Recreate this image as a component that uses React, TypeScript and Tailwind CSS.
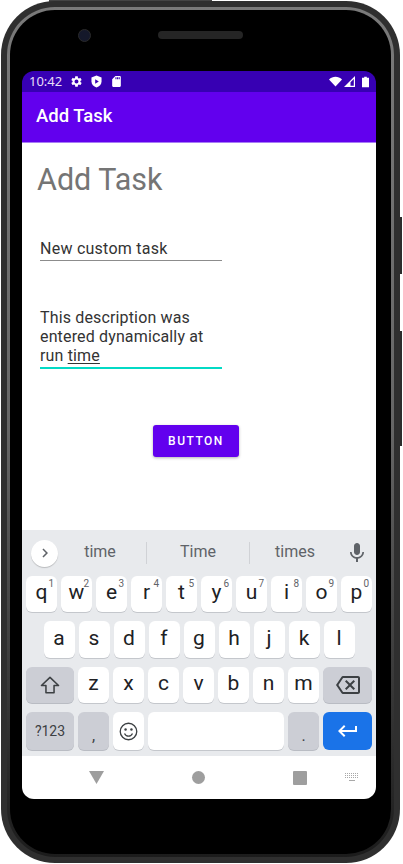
import { MdSettings, MdSdCard, MdMic, MdChevronRight, MdOutlineBackspace, MdKeyboardReturn } from "react-icons/md";

const row1 = [["q", "1"], ["w", "2"], ["e", "3"], ["r", "4"], ["t", "5"], ["y", "6"], ["u", "7"], ["i", "8"], ["o", "9"], ["p", "0"]];
const row2 = ["a", "s", "d", "f", "g", "h", "j", "k", "l"];
const row3 = ["z", "x", "c", "v", "b", "n", "m"];

const whiteKey = "bg-white rounded-[6px] shadow-[0_1px_0_#c4c7cc] flex items-center justify-center text-[#202124] text-[21px] leading-none";
const grayKey = "bg-[#ccced5] rounded-[6px] shadow-[0_1px_0_#b9bcc3] flex items-center justify-center text-[#3c4043]";

function Key({ label }: { label: string }) {
  return <div className={`${whiteKey} w-[31px] h-full pb-[3px]`}>{label}</div>;
}

function StatusBar() {
  return (
    <div className="h-[21px] bg-[#3700B3] flex items-center pl-[7px] pr-[7px] text-white">
      <span className="text-[13px] leading-none text-[#e6dff8] w-[31px]">10:42</span>
      <MdSettings className="ml-[10px] w-[13px] h-[13px]" />
      <svg viewBox="0 0 12 14" className="ml-[8px] w-[11px] h-[13px]">
        <path d="M6 0.5 11.5 2.5V7c0 3-2.3 5.500-5.500 6.500C2.800 12.500 0.500 10 0.500 7V2.500Z" fill="#fff" />
        <path d="M4.600 4.500 8.500 7 4.600 9.500Z" fill="#3700B3" />
      </svg>
      <MdSdCard className="ml-[8px] w-[13px] h-[13px]" />
      <svg viewBox="0 0 14 11" className="ml-auto w-[13px] h-[11px]">
        <path d="M0 3.300C2 1.300 4.400 0.300 7 0.300s5 1 7 3L7 11Z" fill="#fff" />
      </svg>
      <svg viewBox="0 0 11 11" className="ml-[2px] w-[11px] h-[11px]">
        <path d="M11 0V11H0Z" fill="#fff" />
        <path d="M9.800 3V9.800H6.500V6.300Z" fill="#3700B3" />
      </svg>
      <svg viewBox="0 0 8 12" className="ml-[7px] w-[7px] h-[12px]">
        <path d="M2.500 0H5.500V1H8V12H0V1H2.500Z" fill="#fff" />
      </svg>
    </div>
  );
}

function Form() {
  return (
    <div className="flex-1 bg-white font-['Roboto',sans-serif]">
      <h1 className="pl-[15px] pt-[17px] text-[30.500px] leading-[40px] text-[#757575] font-normal">Add Task</h1>
      <div className="ml-[18px] w-[182px] mt-[37px] border-b border-[#8c8c8c] pt-px pb-px h-[24px] text-[16px] leading-[21px] tracking-[0.25px] text-[#333]">
        New custom task
      </div>
      <div className="ml-[18px] w-[182px] mt-[47px] border-b-2 border-[#03DAC5] pb-[2px] text-[16px] leading-[19px] tracking-[0.15px] text-[#333]">
        <div>This description was</div>
        <div>entered dynamically at</div>
        <div>run <span className="underline underline-offset-2">time</span></div>
      </div>
      <div className="mt-[56px] ml-[131px] w-[86px] h-[32px] bg-[#6200EE] rounded-[3px] shadow-[0_1px_3px_rgba(0,0,0,0.3)] flex items-center justify-center text-white text-[12px] font-medium tracking-[1.500px]">
        BUTTON
      </div>
    </div>
  );
}

function Keyboard() {
  return (
    <div className="bg-[#e8eaed] h-[226px] font-['Roboto',sans-serif]">
      <div className="h-[46px] flex items-center">
        <div className="ml-[9px] w-[27px] h-[27px] rounded-full bg-white shadow-[0_1px_1px_rgba(0,0,0,0.2)] flex items-center justify-center">
          <MdChevronRight className="w-[18px] h-[18px] text-[#5f6368]" />
        </div>
        <div className="w-[88px] pr-[4px] pb-[2px] text-center text-[16px] text-[#5f6368]">time</div>
        <div className="w-px h-[22px] bg-[#d0d2d6]" />
        <div className="w-[102px] pb-[2px] text-center text-[16px] text-[#5f6368]">Time</div>
        <div className="w-px h-[22px] bg-[#d0d2d6]" />
        <div className="w-[90px] pb-[2px] text-center text-[16px] text-[#5f6368]">times</div>
        <MdMic className="ml-[5px] w-[24px] h-[24px] text-[#5f6368]" />
      </div>
      <div className="flex flex-col gap-[9px]">
        <div className="flex justify-center gap-[4px] h-[36px]">
          {row1.map(([k, n]) => (
            <div key={k} className={`${whiteKey} relative w-[31px] h-full pb-[3px]`}>
              {k}
              <span className="absolute top-[3px] right-[3px] text-[10px] leading-none text-[#5f6368]">{n}</span>
            </div>
          ))}
        </div>
        <div className="flex justify-center gap-[4px] h-[37px]">
          {row2.map((k) => <Key key={k} label={k} />)}
        </div>
        <div className="flex justify-center gap-[4px] h-[36px]">
          <div className={`${grayKey} w-[48px]`}>
            <svg viewBox="0 0 22 20" className="w-[20px] h-[18px]">
              <path d="M11 1.500 20.500 10.500H15.500V18.500H6.500V10.500H1.500Z" fill="none" stroke="#3c4043" strokeWidth="1.700" strokeLinejoin="round" />
            </svg>
          </div>
          {row3.map((k) => <Key key={k} label={k} />)}
          <div className={`${grayKey} w-[49px]`}>
            <MdOutlineBackspace className="w-[24px] h-[24px]" />
          </div>
        </div>
        <div className="flex justify-center gap-[4px] h-[38px]">
          <div className={`${grayKey} w-[48px] text-[14px]`}>?123</div>
          <div className={`${grayKey} w-[31px] text-[16px] pt-[10px]`}>,</div>
          <div className={`${whiteKey} w-[31px]`}>
            <svg viewBox="0 0 20 20" className="w-[19px] h-[19px]">
              <circle cx="10" cy="10" r="8.700" fill="none" stroke="#3c4043" strokeWidth="1.400" />
              <circle cx="6.900" cy="7.800" r="1.300" fill="#3c4043" />
              <circle cx="13.100" cy="7.800" r="1.300" fill="#3c4043" />
              <path d="M5.800 12c.8 1.800 2.400 2.900 4.200 2.900s3.400-1.100 4.200-2.900" fill="none" stroke="#3c4043" strokeWidth="1.300" />
            </svg>
          </div>
          <div className={`${whiteKey} w-[136px]`} />
          <div className={`${grayKey} w-[31px] text-[16px] pt-[10px]`}>.</div>
          <div className="bg-[#1a73e8] rounded-[6px] w-[49px] flex items-center justify-center text-white">
            <MdKeyboardReturn className="w-[24px] h-[24px]" />
          </div>
        </div>
      </div>
    </div>
  );
}

function NavBar() {
  return (
    <div className="h-[43px] bg-white flex items-center">
      <svg viewBox="0 0 15 13" className="ml-[67px] w-[15px] h-[13px]">
        <path d="M0 0H15L7.500 13Z" fill="#9e9e9e" />
      </svg>
      <div className="ml-[88px] w-[13px] h-[13px] rounded-full bg-[#9e9e9e]" />
      <div className="ml-[88px] w-[14px] h-[14px] rounded-[1px] bg-[#9e9e9e]" />
      <svg viewBox="0 0 14 9" className="ml-[38px] w-[14px] h-[9px]">
        <path d="M0 0.500H14M0 2.500H14M0 4.500H14" stroke="#a8a8a8" strokeWidth="1" strokeDasharray="1 1" />
        <path d="M4 7.500H10" stroke="#a8a8a8" strokeWidth="1" />
      </svg>
    </div>
  );
}

export default function App() {
  return (
    <div className="w-[403px] h-[864px] bg-white overflow-hidden pl-px pt-px">
      <div className="relative w-[399px] h-[862px]">
        {/* hardware buttons */}
        <div className="absolute left-[48px] top-[-1px] w-[163px] h-[2px] bg-[#444]" />
        <div className="absolute right-[-2px] top-[216px] w-[3px] h-[57px] bg-[#2c2c2c]" />
        <div className="absolute right-[-2px] top-[330px] w-[3px] h-[115px] bg-[#2c2c2c]" />

        <div className="relative h-full rounded-[54px] bg-[#2f2f2f] p-[6px]">
          <div className="h-full rounded-[48px] bg-linear-to-b from-[#7a7a7a] via-[#666] to-[#1c1c1c] p-[3px]">
            <div className="h-full rounded-[45px] bg-black px-[12px]">
              <div className="h-[61px] flex items-center pb-[11px]">
                <div className="ml-[56px] w-[13px] h-[13px] rounded-full bg-[#14182a] border border-[#2a2a2a]" />
                <div className="ml-[67px] w-[85px] h-[8px] rounded-full bg-[#252525]" />
              </div>
              <div className="w-[354px] h-[728px] rounded-[12px] overflow-hidden flex flex-col">
                <StatusBar />
                <div className="h-[51px] bg-[#6200EE] flex items-center pl-[14px] text-white text-[18.500px] font-medium font-['Roboto',sans-serif] border-b border-[#a77cf5]">
                  Add Task
                </div>
                <Form />
                <Keyboard />
                <NavBar />
              </div>
            </div>
          </div>
        </div>
      </div>
    </div>
  );
}
